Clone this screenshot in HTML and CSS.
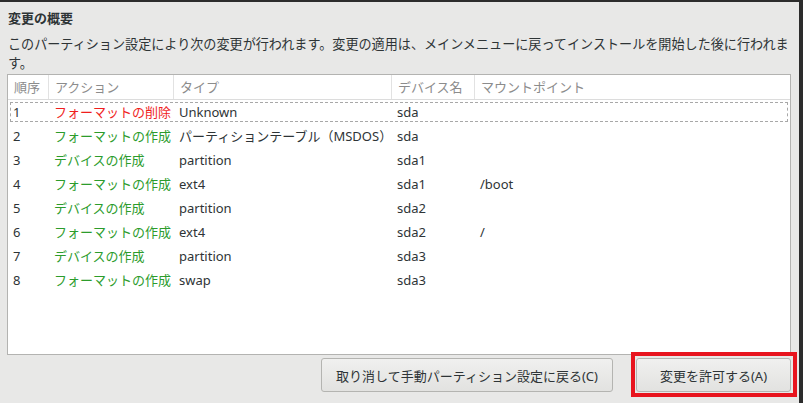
FILE: index.html
```html
<!DOCTYPE html>
<html lang="ja">
<head>
  <meta charset="UTF-8">
  <title>変更の概要</title>
  <link rel="stylesheet" href="styles.css">
</head>
<body>
  <div class="window">
    <h1 class="title">変更の概要</h1>
    <p class="desc">このパーティション設定により次の変更が行われます。変更の適用は、メインメニューに戻ってインストールを開始した後に行われます。</p>

    <div class="list">
      <div class="row head">
        <div class="cell">順序</div>
        <div class="cell">アクション</div>
        <div class="cell">タイプ</div>
        <div class="cell">デバイス名</div>
        <div class="cell">マウントポイント</div>
      </div>
      <div class="row focus">
        <div class="cell">1</div>
        <div class="cell del">フォーマットの削除</div>
        <div class="cell">Unknown</div>
        <div class="cell">sda</div>
        <div class="cell"></div>
      </div>
      <div class="row">
        <div class="cell">2</div>
        <div class="cell add">フォーマットの作成</div>
        <div class="cell">パーティションテーブル（MSDOS）</div>
        <div class="cell">sda</div>
        <div class="cell"></div>
      </div>
      <div class="row">
        <div class="cell">3</div>
        <div class="cell add">デバイスの作成</div>
        <div class="cell">partition</div>
        <div class="cell">sda1</div>
        <div class="cell"></div>
      </div>
      <div class="row">
        <div class="cell">4</div>
        <div class="cell add">フォーマットの作成</div>
        <div class="cell">ext4</div>
        <div class="cell">sda1</div>
        <div class="cell">/boot</div>
      </div>
      <div class="row">
        <div class="cell">5</div>
        <div class="cell add">デバイスの作成</div>
        <div class="cell">partition</div>
        <div class="cell">sda2</div>
        <div class="cell"></div>
      </div>
      <div class="row">
        <div class="cell">6</div>
        <div class="cell add">フォーマットの作成</div>
        <div class="cell">ext4</div>
        <div class="cell">sda2</div>
        <div class="cell">/</div>
      </div>
      <div class="row">
        <div class="cell">7</div>
        <div class="cell add">デバイスの作成</div>
        <div class="cell">partition</div>
        <div class="cell">sda3</div>
        <div class="cell"></div>
      </div>
      <div class="row">
        <div class="cell">8</div>
        <div class="cell add">フォーマットの作成</div>
        <div class="cell">swap</div>
        <div class="cell">sda3</div>
        <div class="cell"></div>
      </div>
    </div>

    <div class="actions">
      <button class="btn btn-cancel">取り消して手動パーティション設定に戻る(C)</button>
      <button class="btn btn-accept">変更を許可する(A)</button>
    </div>
    <div class="highlight"></div>
  </div>
</body>
</html>
```

FILE: styles.css
```css
html, body { margin: 0; padding: 0; }
body {
  width: 803px;
  height: 403px;
  overflow: hidden;
  background: #2c2c2c;
  font-family: "Noto Sans", "Noto Sans CJK JP", sans-serif;
  font-size: 13px;
  color: #2e3436;
}
.window {
  position: relative;
  box-sizing: border-box;
  width: 799px;
  height: 401px;
  margin-top: 2px;
  background: #e8e8e7;
  padding: 7px 8px 0 7px;
  display: flex;
  flex-direction: column;
}
.title {
  margin: 0 0 0 1px;
  font-size: 13px;
  line-height: 19px;
  font-weight: bold;
}
.desc {
  margin: 7px 0 0 1px;
  font-size: 13.1px;
  line-height: 19px;
  width: 790px;
}
.list {
  margin-top: 1px;
  height: 281px;
  box-sizing: border-box;
  background: #fff;
  border: 1px solid #b3b3b1;
}
.row {
  display: grid;
  grid-template-columns: 41px 125px 218px 83px 1fr;
  height: 24px;
  align-items: center;
  line-height: 24px;
  white-space: nowrap;
}
.row .cell { padding-left: 5px; overflow: hidden; }
.head {
  height: 24px;
  color: #8c8c8c;
  border-bottom: 1px solid #dcdcdc;
}
.head .cell {
  height: 24px;
  border-right: 1px solid #e2e2e2;
  padding-left: 6px;
}
.head .cell:last-child { border-right: none; }
.focus { outline: 1px dashed #a8a8a8; outline-offset: -3px; }
.del { color: #f01e1e; }
.add { color: #2c9c2c; }
.actions {
  display: flex;
  justify-content: flex-end;
  gap: 23px;
  margin-top: 3px;
}
.btn {
  height: 34px;
  box-sizing: border-box;
  border: 1px solid #b4b4b1;
  border-radius: 3px;
  background: linear-gradient(#f0f0ef, #e2e2e0);
  font-family: "Noto Sans", "Noto Sans CJK JP", sans-serif;
  font-size: 13px;
  color: #2e3436;
  padding: 0;
}
.btn-cancel { width: 292px; }
.btn-accept { width: 155px; }
.highlight {
  position: absolute;
  left: 631px;
  top: 350px;
  width: 166px;
  height: 45px;
  box-sizing: border-box;
  border: 4px solid #e8141e;
}
```
